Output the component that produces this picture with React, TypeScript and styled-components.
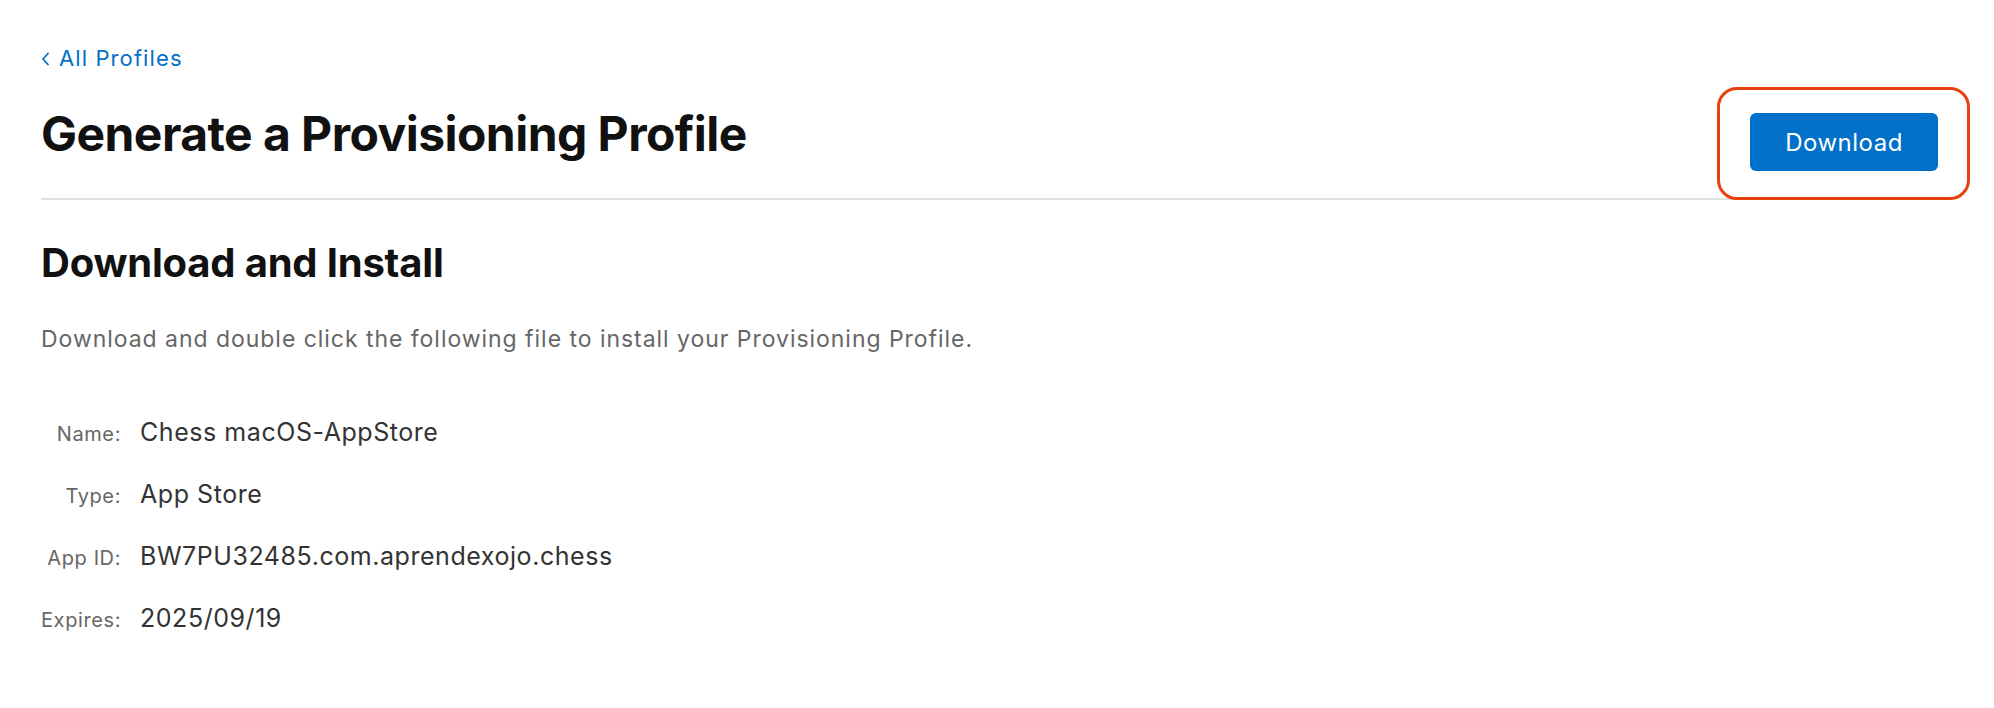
import React from "react";
import styled, { createGlobalStyle } from "styled-components";

const GlobalStyle = createGlobalStyle`
  html, body {
    margin: 0;
    padding: 0;
    background: #ffffff;
  }
  body {
    font-family: Inter, "Noto Sans", "Liberation Sans", sans-serif;
    -webkit-font-smoothing: antialiased;
  }
`;

const Page = styled.main`
  padding: 46px 56px 40px 41px;
  display: flex;
  flex-direction: column;
`;

const BackLink = styled.a`
  align-self: flex-start;
  display: inline-flex;
  align-items: center;
  gap: 9px;
  font-size: 22px;
  line-height: 24px;
  letter-spacing: 1.1px;
  color: #0070c9;
  text-decoration: none;
  cursor: pointer;
`;

const Chevron = styled.svg`
  width: 9px;
  height: 14px;
  margin-top: 2px;
`;

const HeaderRow = styled.header`
  display: flex;
  justify-content: space-between;
  align-items: flex-start;
  margin-top: 37px;
`;

const Title = styled.h1`
  margin: 0;
  font-size: 48px;
  line-height: 53px;
  font-weight: 700;
  color: #111111;
  letter-spacing: -0.55px;
`;

const ButtonSlot = styled.div`
  position: relative;
  margin-top: 6px;
`;

const Highlight = styled.div`
  position: absolute;
  top: -26px;
  left: -33px;
  right: -32px;
  bottom: -29px;
  border: 3px solid #e8400f;
  border-radius: 20px;
  background: #ffffff;
  z-index: 1;
`;

const PrimaryButton = styled.button`
  position: relative;
  z-index: 2;
  width: 188px;
  height: 58px;
  border: none;
  border-radius: 6px;
  background: #0070c9;
  color: #ffffff;
  font-family: inherit;
  font-size: 24px;
  letter-spacing: 0.5px;
  font-weight: 400;
  cursor: pointer;
`;

const Divider = styled.hr`
  margin: 27px 0 0;
  border: none;
  height: 2px;
  background: #e0e0e0;
`;

const SectionTitle = styled.h2`
  margin: 39px 0 0;
  font-size: 40px;
  line-height: 48px;
  font-weight: 700;
  color: #111111;
  letter-spacing: -0.2px;
`;

const Description = styled.p`
  margin: 38px 0 0;
  font-size: 23px;
  line-height: 28px;
  letter-spacing: 0.96px;
  color: #666666;
`;

const Details = styled.dl`
  margin: 63px 0 0;
  display: grid;
  grid-template-columns: 80px auto;
  column-gap: 19px;
  row-gap: 28px;
  align-items: baseline;
  justify-content: start;
`;

const Label = styled.dt`
  margin: 0;
  text-align: right;
  font-size: 20px;
  line-height: 32px;
  letter-spacing: 0.6px;
  color: #666666;
  white-space: nowrap;
`;

const Value = styled.dd`
  margin: 0;
  font-size: 25px;
  line-height: 32px;
  letter-spacing: 0.55px;
  color: #333333;
`;

const details: [string, string][] = [
  ["Name:", "Chess macOS-AppStore"],
  ["Type:", "App Store"],
  ["App ID:", "BW7PU32485.com.aprendexojo.chess"],
  ["Expires:", "2025/09/19"],
];

export default function App() {
  return (
    <>
      <GlobalStyle />
      <Page>
        <BackLink>
          <Chevron viewBox="0 0 9 14" aria-hidden="true">
            <path d="M7 1.5 L2 7 L7 12.5" fill="none" stroke="#0070c9" strokeWidth="1.8" strokeLinecap="round" strokeLinejoin="round" />
          </Chevron>
          All Profiles
        </BackLink>
        <HeaderRow>
          <Title>Generate a Provisioning Profile</Title>
          <ButtonSlot>
            <Highlight />
            <PrimaryButton>Download</PrimaryButton>
          </ButtonSlot>
        </HeaderRow>
        <Divider />
        <SectionTitle>Download and Install</SectionTitle>
        <Description>
          Download and double click the following file to install your Provisioning Profile.
        </Description>
        <Details>
          {details.map(([k, v]) => (
            <React.Fragment key={k}>
              <Label>{k}</Label>
              <Value>{v}</Value>
            </React.Fragment>
          ))}
        </Details>
      </Page>
    </>
  );
}
